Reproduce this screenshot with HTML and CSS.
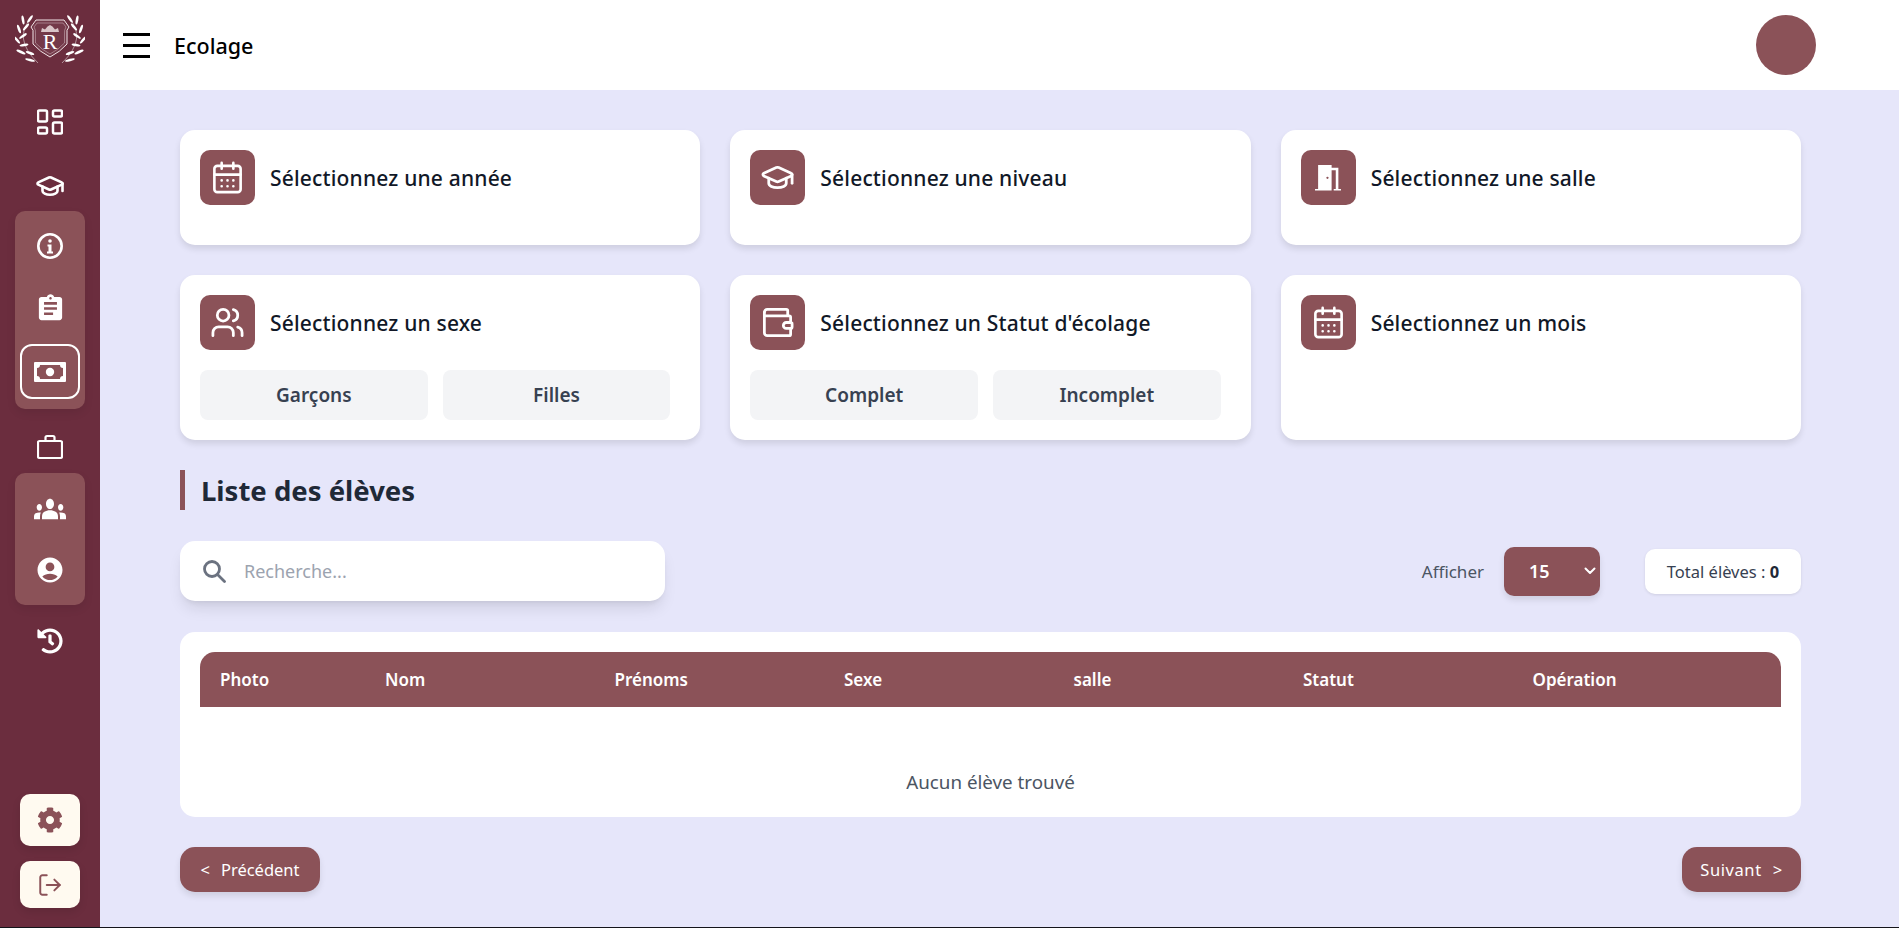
FILE: index.html
```html
<!DOCTYPE html>
<html lang="fr">
<head>
<meta charset="utf-8">
<title>Ecolage</title>
<link rel="stylesheet" href="styles.css">
</head>
<body>
<svg class="defs" width="0" height="0" aria-hidden="true">
  <defs>
    <symbol id="i-cal" viewBox="0 0 24 24"><path d="M8 2v4M16 2v4M3 10h18M8 14h.01M12 14h.01M16 14h.01M8 18h.01M12 18h.01M16 18h.01"/><rect x="3" y="4" width="18" height="18" rx="2"/></symbol>
    <symbol id="i-cap" viewBox="0 0 24 24"><path d="M21.42 10.922a1 1 0 0 0-.019-1.838L12.83 5.18a2 2 0 0 0-1.66 0L2.6 9.08a1 1 0 0 0 0 1.832l8.57 3.908a2 2 0 0 0 1.66 0z"/><path d="M22 10v6"/><path d="M6 12.5V16a6 3 0 0 0 12 0v-3.5"/></symbol>
  </defs>
</svg>
<div class="app">
  <aside class="sidebar">
    <div class="logo">
      <svg class="logo-svg" viewBox="15 14 70 50" width="70" height="50">
        <defs>
          <g id="laurel">
            <path class="lstem" d="M32 17Q12 38 38 63"/>
            <ellipse class="leaf" cx="30" cy="19" rx="4.5" ry="1.3" transform="rotate(-55 30 19)"/>
            <ellipse class="leaf" cx="23" cy="20" rx="4.5" ry="1.3" transform="rotate(80 23 20)"/>
            <ellipse class="leaf" cx="26" cy="27" rx="4.5" ry="1.3" transform="rotate(-50 26 27)"/>
            <ellipse class="leaf" cx="19" cy="29" rx="4.5" ry="1.3" transform="rotate(70 19 29)"/>
            <ellipse class="leaf" cx="23" cy="36" rx="4.5" ry="1.3" transform="rotate(-35 23 36)"/>
            <ellipse class="leaf" cx="17" cy="40" rx="4.5" ry="1.3" transform="rotate(50 17 40)"/>
            <ellipse class="leaf" cx="24" cy="45" rx="4.5" ry="1.3" transform="rotate(-10 24 45)"/>
            <ellipse class="leaf" cx="21" cy="52" rx="5" ry="1.3" transform="rotate(25 21 52)"/>
            <ellipse class="leaf" cx="30" cy="53" rx="4.5" ry="1.3" transform="rotate(20 30 53)"/>
            <ellipse class="leaf" cx="30" cy="60" rx="5" ry="1.2" transform="rotate(15 30 60)"/>
          </g>
        </defs>
        <use href="#laurel"/>
        <use href="#laurel" transform="translate(100 0) scale(-1 1)"/>
        <path class="shield" d="M36 20H64L69 27Q66 30 67 34V44Q60 52 50 57Q40 52 33 44V34Q34 30 31 27Z"/>
        <path class="shield thin" d="M37 23H63L66 27Q64 30 64.500 34V43Q58 50 50 54Q42 50 35.500 43V34Q36 30 34 27Z"/>
        <path class="crown" d="M41 32L42 28L45 29.500L47.500 26.500L50 25L52.500 26.500L55 29.500L58 28L59 32Z"/>
        <text class="logo-r" x="50" y="49" text-anchor="middle">R</text>
      </svg>
    </div>

    <a class="nav nav-dash"><svg class="ico dash s26" viewBox="0 0 26 25"><rect x="1" y="1" width="9" height="11" rx="1.500"/><rect x="16" y="1" width="9" height="6" rx="1.500"/><rect x="1" y="18" width="9" height="6" rx="1.500"/><rect x="16" y="13" width="9" height="11" rx="1.500"/></svg></a>
    <a class="nav nav-cap"><svg class="ico s30"><use href="#i-cap"/></svg></a>

    <div class="group group-a">
      <a class="nav"><svg class="ico s26 bold" viewBox="0 0 26 26"><circle cx="13" cy="13" r="11.700"/><circle class="dot" cx="13" cy="8" r="1.800"/><path class="glyph" d="M10.500 11.500h4v7h1.500v2h-6v-2h1.500v-5h-1z"/></svg></a>
      <a class="nav"><svg class="solid s32" viewBox="0 0 24 24"><path d="M19 3h-4.180C14.400 1.840 13.300 1 12 1c-1.300 0-2.400.84-2.820 2H5c-1.100 0-2 .9-2 2v14c0 1.100.9 2 2 2h14c1.100 0 2-.9 2-2V5c0-1.100-.9-2-2-2zm-7 0c.55 0 1 .45 1 1s-.45 1-1 1-1-.45-1-1 .45-1 1-1zm2 14H7v-2h7v2zm3-4H7v-2h10v2zm0-4H7V7h10v2z"/></svg></a>
      <a class="nav nav-active"><svg class="solid money" viewBox="0 0 32 20"><path fill-rule="evenodd" d="M1 0h30a1 1 0 0 1 1 1v18a1 1 0 0 1-1 1H1a1 1 0 0 1-1-1V1a1 1 0 0 1 1-1zM6 3a3 3 0 0 1-3 3v8a3 3 0 0 1 3 3h20a3 3 0 0 1 3-3V6a3 3 0 0 1-3-3z"/><circle cx="16" cy="10" r="4.200"/></svg></a>
    </div>

    <a class="nav nav-brief"><svg class="ico s26 thin" viewBox="0 0 26 24"><rect x="1" y="6" width="24" height="17" rx="1.500"/><path d="M8.500 6V2.500a1.500 1.500 0 0 1 1.500-1.500h6a1.500 1.500 0 0 1 1.500 1.500V6"/></svg></a>

    <div class="group group-b">
      <a class="nav"><svg class="solid users" viewBox="0 5.500 24 13" preserveAspectRatio="none"><path d="M12 12.750c1.630 0 3.070.39 4.240.9 1.080.48 1.760 1.560 1.760 2.730V18H6v-1.610c0-1.180.68-2.260 1.760-2.730 1.170-.52 2.610-.91 4.240-.91zM4 13c1.100 0 2-.9 2-2s-.9-2-2-2-2 .9-2 2 .9 2 2 2zm1.130 1.100c-.37-.06-.74-.1-1.130-.1-.99 0-1.930.21-2.780.58C.48 14.900 0 15.620 0 16.430V18h4.500v-1.610c0-.83.23-1.610.63-2.290zM20 13c1.100 0 2-.9 2-2s-.9-2-2-2-2 .9-2 2 .9 2 2 2zm4 3.430c0-.81-.48-1.530-1.220-1.850-.85-.37-1.790-.58-2.780-.58-.39 0-.76.04-1.130.1.4.68.63 1.460.63 2.290V18H24v-1.570zM12 6c1.660 0 3 1.340 3 3s-1.340 3-3 3-3-1.340-3-3 1.340-3 3-3z"/></svg></a>
      <a class="nav"><svg class="solid s30" viewBox="0 0 24 24"><path d="M12 2C6.480 2 2 6.480 2 12s4.480 10 10 10 10-4.480 10-10S17.520 2 12 2zm0 4c1.930 0 3.500 1.570 3.500 3.500S13.930 13 12 13s-3.500-1.570-3.500-3.500S10.070 6 12 6zm0 14c-2.030 0-4.430-.82-6.140-2.880C7.550 15.800 9.680 15 12 15s4.450.8 6.140 2.120C16.430 19.180 14.030 20 12 20z"/></svg></a>
    </div>

    <a class="nav nav-hist"><svg class="solid s26" viewBox="0 0 512 512"><path d="M504 255.531c.253 136.640-111.180 248.372-247.820 248.468-59.015.042-113.223-20.530-155.822-54.911-11.077-8.940-11.905-25.541-1.839-35.607l11.267-11.267c8.609-8.609 22.353-9.551 31.891-1.984C173.062 425.135 212.781 440 256 440c101.705 0 184-82.311 184-184 0-101.705-82.311-184-184-184-48.814 0-93.149 18.969-126.068 49.932l50.754 50.754c10.080 10.080 2.941 27.314-11.313 27.314H24c-8.837 0-16-7.163-16-16V38.627c0-14.254 17.234-21.393 27.314-11.314l49.372 49.372C129.209 34.136 189.552 8 256 8c136.810 0 247.747 110.780 248 247.531zm-180.912 78.784l9.823-12.630c8.138-10.463 6.253-25.542-4.210-33.679L288 256.349V152c0-13.255-10.745-24-24-24h-16c-13.255 0-24 10.745-24 24v135.651l65.409 50.874c10.463 8.137 25.541 6.253 33.679-4.210z"/></svg></a>

    <div class="side-bottom">
      <a class="cream cream-gear"><svg class="gear" viewBox="0 0 512 512"><path d="M487.400 315.700l-42.600-24.600c4.300-23.200 4.300-47 0-70.200l42.600-24.600c4.900-2.800 7.100-8.600 5.500-14-11.100-35.600-30-67.800-54.700-94.600-3.800-4.100-10-5.100-14.800-2.300L380.800 110c-17.900-15.400-38.500-27.300-60.800-35.100V25.800c0-5.600-3.900-10.500-9.400-11.700-36.700-8.200-74.300-7.800-109.200 0-5.500 1.200-9.400 6.100-9.400 11.700V75c-22.200 7.900-42.800 19.800-60.800 35.100L88.700 85.500c-4.900-2.800-11-1.900-14.800 2.300-24.700 26.700-43.600 58.900-54.700 94.600-1.700 5.400.6 11.200 5.500 14L67.300 221c-4.300 23.200-4.300 47 0 70.200l-42.600 24.600c-4.900 2.800-7.100 8.600-5.500 14 11.100 35.600 30 67.800 54.700 94.600 3.800 4.100 10 5.100 14.800 2.300l42.600-24.600c17.900 15.400 38.500 27.300 60.800 35.100v49.200c0 5.600 3.900 10.500 9.400 11.700 36.700 8.200 74.300 7.800 109.200 0 5.500-1.200 9.400-6.100 9.400-11.700v-49.200c22.200-7.900 42.800-19.800 60.800-35.100l42.600 24.600c4.900 2.800 11 1.900 14.800-2.300 24.700-26.700 43.600-58.900 54.700-94.600 1.500-5.500-.7-11.300-5.600-14.100zM256 336c-44.100 0-80-35.900-80-80s35.900-80 80-80 80 35.900 80 80-35.900 80-80 80z"/></svg></a>
      <a class="cream cream-out"><svg class="out" viewBox="0 0 24 24"><path d="M9 21H5a2 2 0 0 1-2-2V5a2 2 0 0 1 2-2h4"/><path d="M16 17l5-5-5-5"/><path d="M21 12H9"/></svg></a>
    </div>
  </aside>

  <div class="content">
    <header class="topbar">
      <button class="burger" aria-label="Menu"><span></span><span></span><span></span></button>
      <h1 class="page-title">Ecolage</h1>
      <div class="avatar"></div>
    </header>

    <main class="main">
      <section class="filters">
        <article class="card">
          <div class="card-head"><span class="badge"><svg class="ico b32"><use href="#i-cal"/></svg></span><h2>Sélectionnez une année</h2></div>
        </article>
        <article class="card">
          <div class="card-head"><span class="badge"><svg class="ico b36"><use href="#i-cap"/></svg></span><h2>Sélectionnez une niveau</h2></div>
        </article>
        <article class="card">
          <div class="card-head"><span class="badge"><svg class="solid door" viewBox="0 0 26 26"><path fill-rule="evenodd" d="M3 1h13v2.500h6.500V24H25v1.500H18V24h2V6h-4v19.500H0V24h3zM12 12.200a1.100 1.100 0 1 0 0 2.200 1.100 1.100 0 0 0 0-2.200z"/></svg></span><h2>Sélectionnez une salle</h2></div>
        </article>
        <article class="card">
          <div class="card-head"><span class="badge"><svg class="ico b36" viewBox="0 0 24 24"><path d="M16 21v-2a4 4 0 0 0-4-4H6a4 4 0 0 0-4 4v2"/><circle cx="9" cy="7" r="4"/><path d="M22 21v-2a4 4 0 0 0-3-3.870"/><path d="M16 3.130a4 4 0 0 1 0 7.750"/></svg></span><h2>Sélectionnez un sexe</h2></div>
          <div class="choices"><button class="choice">Garçons</button><button class="choice">Filles</button></div>
        </article>
        <article class="card">
          <div class="card-head"><span class="badge"><svg class="ico b36" viewBox="0 0 24 24"><path d="M19 7V4a1 1 0 0 0-1-1H5a2 2 0 0 0-2 2"/><path d="M3 5v14a2 2 0 0 0 2 2h15a1 1 0 0 0 1-1v-4"/><path d="M3 7.500h17a1 1 0 0 1 1 1V12h-3a2 2 0 0 0 0 4h3a1 1 0 0 0 1-1v-2a1 1 0 0 0-1-1"/></svg></span><h2>Sélectionnez un Statut d'écolage</h2></div>
          <div class="choices"><button class="choice">Complet</button><button class="choice">Incomplet</button></div>
        </article>
        <article class="card">
          <div class="card-head"><span class="badge"><svg class="ico b32"><use href="#i-cal"/></svg></span><h2>Sélectionnez un mois</h2></div>
        </article>
      </section>

      <h2 class="section-title">Liste des élèves</h2>

      <section class="toolbar">
        <label class="search">
          <svg class="search-ico" viewBox="0 0 24 24"><circle cx="10" cy="10" r="7.500"/><path d="M15.500 15.500L22.500 22.500"/></svg>
          <input type="text" placeholder="Recherche...">
        </label>
        <div class="tools">
          <span class="show-label">Afficher</span>
          <div class="select-wrap">
            <select class="select"><option>15</option></select>
            <svg class="chev" viewBox="0 0 12 8"><path d="M1.500 1.500L6 6l4.500-4.500"/></svg>
          </div>
          <div class="total">Total élèves : <b>0</b></div>
        </div>
      </section>

      <section class="table-card">
        <div class="thead">
          <span>Photo</span><span>Nom</span><span>Prénoms</span><span>Sexe</span><span>salle</span><span>Statut</span><span>Opération</span>
        </div>
        <p class="empty">Aucun élève trouvé</p>
      </section>

      <nav class="pager">
        <button class="page-btn page-prev"><span class="arrow">&lt;</span>Précédent</button>
        <button class="page-btn page-next">Suivant<span class="arrow arrow-r">&gt;</span></button>
      </nav>
    </main>
  </div>
</div>
</body>
</html>
```

FILE: styles.css
```css
* { box-sizing: border-box; }

html, body {
  margin: 0;
  height: 100%;
  overflow: hidden;
}

body {
  font-family: "Noto Sans", "Open Sans", "Liberation Sans", sans-serif;
  background: #e6e6fa;
  color: #111827;
}

.defs { display: block; height: 0; }

.app {
  display: flex;
  height: 928px;
  border-bottom: 1px solid #14141a;
}

/* Sidebar */
.sidebar {
  width: 100px;
  flex: none;
  background: #6b2d3e;
  display: flex;
  flex-direction: column;
  padding: 0 15px;
}

.logo { height: 90px; padding-top: 14px; flex: none; }
.logo-svg { display: block; }
.lstem { fill: none; stroke: #fff; stroke-width: .6; opacity: .8; }
.leaf { fill: #fff; }
.shield { fill: rgba(255, 255, 255, .06); stroke: #f0e4e6; stroke-width: 1; }
.shield.thin { fill: none; stroke-width: .5; opacity: .8; }
.crown { fill: #d9c4c8; }
.logo-r { font-family: "Liberation Serif", serif; font-size: 22px; fill: #fff; }

.nav {
  display: flex;
  align-items: center;
  justify-content: center;
  height: 55px;
  flex: none;
  border-radius: 12px;
}

.nav-dash { height: 50px; margin-top: 7px; }
.nav-cap { height: 50px; margin-top: 14px; }
.nav-brief { height: 64px; padding-top: 12px; }
.nav-hist { height: 72px; }

.nav-active {
  margin: 0 5px;
  border: 2px solid #fff;
}

.group {
  background: #8b5258;
  border-radius: 10px;
  display: flex;
  flex-direction: column;
  box-shadow: 0 4px 10px rgba(0, 0, 0, .08);
}

.group-a { padding: 7px 0 10px; gap: 8px; }
.group-b { padding: 8px 0; gap: 6px; }

.ico {
  fill: none;
  stroke: #fff;
  stroke-width: 2;
  stroke-linecap: round;
  stroke-linejoin: round;
  display: block;
}

.ico .dot, .ico .glyph { fill: #fff; stroke: none; }
.ico.thin { stroke-width: 2.2; }
.ico.dash { stroke-width: 2.5; }
.ico.bold { stroke-width: 2.6; }
.solid { fill: #fff; display: block; }

.s26 { width: 26px; height: 26px; }
.s30 { width: 30px; height: 30px; }
.s32 { width: 31px; height: 31px; }
.money { width: 32px; height: 20px; }
.users { width: 32px; height: 22px; }
.nav-cap .ico { stroke-width: 2.1; }

.side-bottom {
  margin-top: auto;
  padding: 0 5px 19px;
  display: flex;
  flex-direction: column;
  gap: 15px;
}

.cream {
  display: flex;
  align-items: center;
  justify-content: center;
  background: #fffaf0;
  border-radius: 10px;
  box-shadow: 0 4px 8px rgba(0, 0, 0, .1);
}

.cream-gear { height: 52px; }
.cream-out { height: 47px; }
.gear { width: 26px; height: 26px; fill: #8b5258; display: block; }
.out {
  width: 26px; height: 26px; fill: none; stroke: #8b5258;
  stroke-width: 1.8; stroke-linecap: round; stroke-linejoin: round; display: block;
}

/* Content */
.content { flex: 1; min-width: 0; display: flex; flex-direction: column; }

.topbar {
  height: 90px;
  flex: none;
  background: #fff;
  display: flex;
  align-items: center;
  padding: 0 83px 0 23px;
}

.burger {
  width: 27px;
  height: 25px;
  padding: 0;
  border: 0;
  background: none;
  display: flex;
  flex-direction: column;
  justify-content: space-between;
}

.burger span { display: block; height: 3px; background: #000; }

.page-title {
  margin: 0 0 0 24px;
  font-size: 21.500px;
  font-weight: 500;
  color: #000;
  flex: 1;
}

.avatar { width: 60px; height: 60px; border-radius: 50%; background: #8b5258; }

.main {
  flex: 1;
  padding: 40px 98px 0 80px;
}

.filters {
  display: grid;
  grid-template-columns: repeat(3, 1fr);
  grid-template-rows: 115px 165px;
  gap: 30px;
}

.card {
  background: #fff;
  border-radius: 15px;
  padding: 20px;
  box-shadow: 0 4px 6px rgba(0, 0, 0, .1);
}

.card-head { display: flex; align-items: center; gap: 15px; }
.card-head h2 {
  margin: 0;
  font-size: 21px;
  font-weight: 500;
  color: #111827;
  letter-spacing: .18px;
}

.badge {
  width: 55px;
  height: 55px;
  flex: none;
  display: flex;
  align-items: center;
  justify-content: center;
  background: #8b5258;
  border-radius: 10px;
}

.b32 { width: 35px; height: 35px; stroke-width: 1.8; }
.b36 { width: 35px; height: 35px; stroke-width: 1.9; }
.door { width: 27px; height: 27px; }

.choices {
  display: grid;
  grid-template-columns: 1fr 1fr;
  gap: 15px;
  margin: 20px 10px 0 0;
}

.choice {
  height: 50px;
  border: 0;
  border-radius: 8px;
  background: #f3f4f6;
  color: #374151;
  font: 600 19px "Noto Sans", "Open Sans", sans-serif;
}

.section-title {
  margin: 30px 0 31px;
  height: 40px;
  border-left: 5px solid #8b5258;
  padding-left: 16px;
  font-size: 27.500px;
  line-height: 42px;
  font-weight: 700;
  color: #1f2937;
}

.toolbar {
  display: flex;
  align-items: center;
  justify-content: space-between;
  height: 60px;
}

.search {
  width: 485px;
  height: 60px;
  display: flex;
  align-items: center;
  gap: 16px;
  padding-left: 22px;
  background: #fff;
  border-radius: 15px;
  box-shadow: 0 10px 15px -3px rgba(0, 0, 0, .1), 0 4px 6px -4px rgba(0, 0, 0, .1);
}

.search-ico {
  width: 24px; height: 24px; fill: none; stroke: #6b7280; stroke-width: 2.8;
  stroke-linecap: round; flex: none; display: block;
}

.search input {
  flex: 1;
  min-width: 0;
  border: 0;
  outline: 0;
  background: none;
  font: 400 18px "Noto Sans", "Open Sans", sans-serif;
  color: #111827;
}

.search input::placeholder { color: #9ca3af; opacity: 1; }

.tools { display: flex; align-items: center; }

.show-label { font-size: 17px; color: #4b5563; margin-right: 20px; }

.select-wrap { position: relative; margin-right: 45px; }

.select {
  display: block;
  appearance: none;
  -webkit-appearance: none;
  width: 96px;
  height: 49px;
  border: 0;
  border-radius: 10px;
  background: #8b5258;
  color: #fff;
  font: 600 18px "Noto Sans", "Open Sans", sans-serif;
  padding-left: 25px;
  box-shadow: 0 4px 6px rgba(0, 0, 0, .1);
}

.chev {
  position: absolute;
  right: 4px;
  top: 20px;
  width: 12px;
  height: 8px;
  fill: none;
  stroke: #fff;
  stroke-width: 2;
  stroke-linecap: round;
  stroke-linejoin: round;
  pointer-events: none;
}

.total {
  width: 156px;
  height: 45px;
  display: flex;
  align-items: center;
  justify-content: center;
  background: #fff;
  border-radius: 10px;
  color: #374151;
  font-size: 16.500px;
  box-shadow: 0 1px 3px rgba(0, 0, 0, .1);
  white-space: pre;
}

.total b { color: #1f2937; }

.table-card {
  margin-top: 31px;
  height: 185px;
  background: #fff;
  border-radius: 15px;
  padding: 20px;
}

.thead {
  height: 55px;
  display: grid;
  grid-template-columns: 165px repeat(6, 229.500px);
  align-items: center;
  padding-left: 20px;
  background: #8b5258;
  border-radius: 15px 15px 0 0;
  color: #fff;
  font-size: 17px;
  font-weight: 600;
}

.empty {
  margin: 60px 0 0;
  text-align: center;
  font-size: 18.800px;
  line-height: 30px;
  color: #4b5563;
}

.pager {
  display: flex;
  justify-content: space-between;
  margin-top: 30px;
}

.page-btn {
  height: 45px;
  padding: 0;
  border: 0;
  border-radius: 15px;
  background: #8b5258;
  color: #fff;
  font: 400 16.500px "Noto Sans", "Open Sans", sans-serif;
  box-shadow: 0 4px 6px rgba(0, 0, 0, .1);
}

.page-prev { width: 140px; }
.page-next { width: 119px; letter-spacing: .6px; }

.arrow { margin-right: 11px; }
.arrow-r { margin: 0 0 0 11px; }
```
